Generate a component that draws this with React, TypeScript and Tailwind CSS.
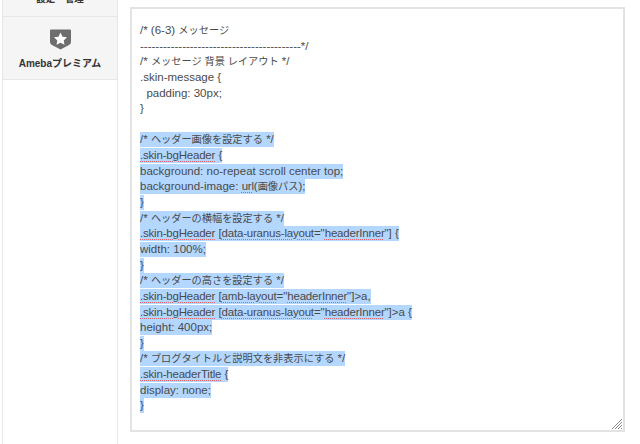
import React from "react";

const FONT = { fontFamily: '"Liberation Sans", "Noto Sans CJK JP", sans-serif' };

// text with the red spell check underline
function Sp({ children }: { children: React.ReactNode }) {
  return <span className="tracking-[-0.2px] underline decoration-dotted decoration-[#e4606a] decoration-1 underline-offset-2">{children}</span>;
}

function Sel({ children }: { children: React.ReactNode }) {
  return <span className="inline-block h-[15px] bg-[#b3d7ff] align-top leading-[15.6px]">{children}</span>;
}

// japanese runs are a bit smaller than the latin text
function Ja({ children }: { children: React.ReactNode }) {
  return <span className="text-[10.2px]">{children}</span>;
}

function Line({ children }: { children?: React.ReactNode }) {
  return <div className="h-[15.65px] whitespace-pre leading-[15.6px]">{children}</div>;
}

export default function App() {
  return (
    <div className="flex h-[444px] w-[640px] overflow-hidden bg-white text-[#4a4a4a]" style={FONT}>
      <aside className="ml-[2px] flex w-[116px] shrink-0 flex-col border-x border-[#e8e8e8]">
        <div className="flex h-[17px] items-end justify-center overflow-hidden border-b border-[#e6e6e6] bg-[#f5f5f5] pb-[10px] text-[9.5px] leading-[14px] font-bold text-[#333]">
          <span className="shrink-0">設定・管理</span>
        </div>
        <div className="flex h-[63px] flex-col items-center border-b border-[#e6e6e6] bg-[#f5f5f5] pt-[12px]">
          <svg width="21" height="21" viewBox="0 0 21 21">
            <path d="M0 1.5 Q0 .5 1 .5 H20 Q21 .5 21 1.5 V13 Q21 15 19 16 L10.5 20.5 L2 16 Q0 15 0 13Z" fill="#6e6e6e" />
            <path d="M10.5 3.6 L12.5 7.7 L17 8.3 L13.7 11.4 L14.5 15.8 L10.5 13.7 L6.5 15.8 L7.3 11.4 L4 8.3 L8.5 7.7Z" fill="#fff" />
          </svg>
          <span className="mt-[7px] text-[10px] leading-[14px] font-bold text-[#333]">Amebaプレミアム</span>
        </div>
      </aside>
      <main className="ml-[12px] pt-[7px]">
        <div className="relative h-[425px] w-[495px] border-2 border-[#e3e3e3] pt-[14px] pl-[8px] text-[11.5px]">
          <Line>/* (6-3) <Ja>メッセージ</Ja></Line>
          <Line>------------------------------------------*/</Line>
          <Line>/* <Ja>メッセージ 背景 レイアウト</Ja> */</Line>
          <Line>.skin-message {"{"}</Line>
          <Line>  padding: 30px;</Line>
          <Line>{"}"}</Line>
          <Line />
          <Line><Sel>/* <Ja>ヘッダー画像を設定する</Ja> */</Sel></Line>
          <Line><Sel><Sp>.skin-bgHeader</Sp> {"{"}</Sel></Line>
          <Line><Sel>background: no-repeat scroll center top;</Sel></Line>
          <Line><Sel>background-image: <Sp>url</Sp>(<Ja>画像パス</Ja>);</Sel></Line>
          <Line><Sel>{"}"}</Sel></Line>
          <Line><Sel>/* <Ja>ヘッダーの横幅を設定する</Ja> */</Sel></Line>
          <Line><Sel><Sp>.skin-bgHeader</Sp> [<Sp>data-uranus-layout</Sp>="<Sp>headerInner</Sp>"] {"{"}</Sel></Line>
          <Line><Sel>width: 100%;</Sel></Line>
          <Line><Sel>{"}"}</Sel></Line>
          <Line><Sel>/* <Ja>ヘッダーの高さを設定する</Ja> */</Sel></Line>
          <Line><Sel><Sp>.skin-bgHeader</Sp> [<Sp>amb-layout</Sp>="<Sp>headerInner</Sp>"]&gt;a,</Sel></Line>
          <Line><Sel><Sp>.skin-bgHeader</Sp> [<Sp>data-uranus-layout</Sp>="<Sp>headerInner</Sp>"]&gt;a {"{"}</Sel></Line>
          <Line><Sel>height: 400px;</Sel></Line>
          <Line><Sel>{"}"}</Sel></Line>
          <Line><Sel>/* <Ja>ブログタイトルと説明文を非表示にする</Ja> */</Sel></Line>
          <Line><Sel><Sp>.skin-headerTitle</Sp> {"{"}</Sel></Line>
          <Line><Sel>display: none;</Sel></Line>
          <Line><Sel>{"}"}</Sel></Line>
          <svg className="absolute right-[0px] bottom-[0px]" width="12" height="12" viewBox="0 0 12 12">
            <path d="M1 11 L11 1 M4 11 L11 4 M7 11 L11 7 M10 11 L11 10" stroke="#8a8a8a" strokeWidth="1" />
          </svg>
        </div>
      </main>
    </div>
  );
}
